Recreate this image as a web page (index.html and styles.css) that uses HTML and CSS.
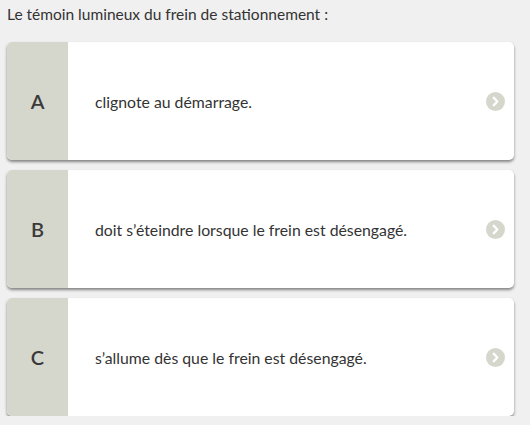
FILE: index.html
```html
<!DOCTYPE html>
<html lang="fr">
<head>
<meta charset="utf-8">
<link rel="stylesheet" href="styles.css">
</head>
<body>
<div class="question">Le témoin lumineux du frein de stationnement :</div>
<div class="answers">
  <div class="card">
    <div class="letter">A</div>
    <div class="text">clignote au démarrage.</div>
    <div class="go"><svg width="19" height="19" viewBox="0 0 19 19"><circle cx="9.5" cy="9.5" r="9.5" fill="#d5d7cd"/><path d="M7.8 5.8 L11.3 9.5 L7.8 13.2" fill="none" stroke="#fff" stroke-width="2.4" stroke-linecap="round" stroke-linejoin="round"/></svg></div>
  </div>
  <div class="card">
    <div class="letter">B</div>
    <div class="text">doit s’éteindre lorsque le frein est désengagé.</div>
    <div class="go"><svg width="19" height="19" viewBox="0 0 19 19"><circle cx="9.5" cy="9.5" r="9.5" fill="#d5d7cd"/><path d="M7.8 5.8 L11.3 9.5 L7.8 13.2" fill="none" stroke="#fff" stroke-width="2.4" stroke-linecap="round" stroke-linejoin="round"/></svg></div>
  </div>
  <div class="card">
    <div class="letter">C</div>
    <div class="text">s’allume dès que le frein est désengagé.</div>
    <div class="go"><svg width="19" height="19" viewBox="0 0 19 19"><circle cx="9.5" cy="9.5" r="9.5" fill="#d5d7cd"/><path d="M7.8 5.8 L11.3 9.5 L7.8 13.2" fill="none" stroke="#fff" stroke-width="2.4" stroke-linecap="round" stroke-linejoin="round"/></svg></div>
  </div>
</div>
</body>
</html>
```
FILE: styles.css
```css
html, body {
  margin: 0;
  padding: 0;
  background: #f0f0f0;
  font-family: Lato, "Open Sans", sans-serif;
  color: #333;
}
body {
  padding: 4px 16px 0 7px;
}
.question {
  font-size: 15.5px;
  line-height: 20px;
  color: #333;
}
.answers {
  margin-top: 18px;
  display: flex;
  flex-direction: column;
  gap: 10px;
}
.card {
  height: 118px;
  display: flex;
  align-items: center;
  background: #fff;
  border-radius: 5px;
  overflow: hidden;
  box-shadow: 0 2px 3px rgba(0,0,0,0.45);
}
.letter {
  width: 61px;
  align-self: stretch;
  background: #d5d7cd;
  display: flex;
  align-items: center;
  justify-content: center;
  font-size: 20px;
  font-weight: 600;
  color: #3a3a3a;
}
.text {
  flex: 1;
  padding-left: 27px;
  font-size: 15.8px;
  color: #333;
}
.go {
  width: 19px;
  height: 19px;
  margin-right: 9px;
}
.go svg { display: block; }
```
